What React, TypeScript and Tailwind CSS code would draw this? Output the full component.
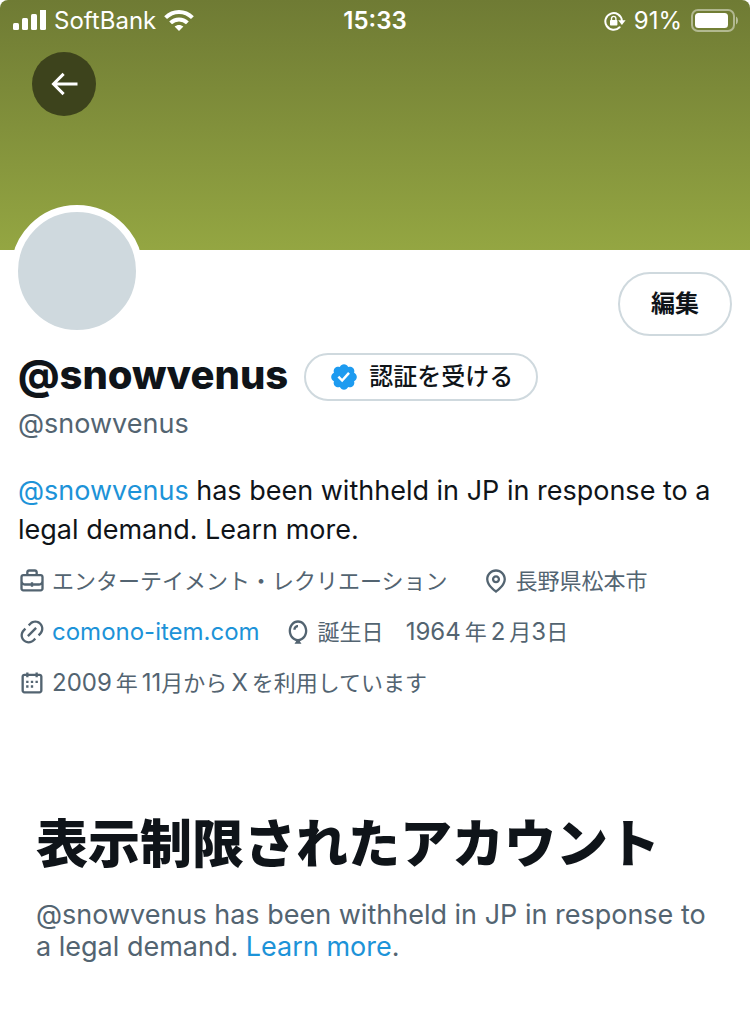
import type { ReactNode } from "react";

const icons = {
  back: "M7.414 13l5.043 5.04-1.414 1.42L3.586 12l7.457-7.46 1.414 1.42L7.414 11H21v2H7.414z",
  verified:
    "M22.25 12c0-1.43-.88-2.67-2.19-3.34.46-1.39.2-2.9-.81-3.91s-2.52-1.27-3.91-.81c-.66-1.31-1.91-2.19-3.34-2.19s-2.67.88-3.33 2.19c-1.4-.46-2.91-.2-3.92.81s-1.26 2.52-.8 3.91c-1.31.67-2.2 1.91-2.2 3.34s.89 2.67 2.2 3.34c-.46 1.39-.21 2.9.8 3.91s2.52 1.26 3.91.81c.67 1.31 1.91 2.19 3.34 2.19s2.68-.88 3.34-2.19c1.39.45 2.9.2 3.91-.81s1.27-2.52.81-3.91c1.31-.67 2.19-1.91 2.19-3.34zm-11.71 4.2L6.8 12.46l1.41-1.42 2.26 2.26 4.8-5.23 1.47 1.36-6.2 6.77z",
  briefcase:
    "M19.5 6H17V4.5C17 3.12 15.88 2 14.5 2h-5C8.12 2 7 3.12 7 4.5V6H4.5C3.12 6 2 7.12 2 8.5v10C2 19.88 3.12 21 4.5 21h15c1.38 0 2.5-1.12 2.5-2.5v-10C22 7.12 20.88 6 19.5 6zM9 4.5c0-.28.23-.5.5-.5h5c.28 0 .5.22.5.5V6H9V4.5zm11 14c0 .28-.22.5-.5.5h-15c-.27 0-.5-.22-.5-.5v-3.04c.59.35 1.27.54 2 .54h5v1h2v-1h5c.73 0 1.41-.19 2-.54v3.04zm0-6.49c0 1.1-.9 1.99-2 1.99h-5v-1h-2v1H6c-1.1 0-2-.9-2-2V8.5c0-.28.23-.5.5-.5h15c.28 0 .5.22.5.5v3.51z",
  location:
    "M12 7c-1.93 0-3.5 1.57-3.5 3.5S10.07 14 12 14s3.5-1.57 3.5-3.5S13.93 7 12 7zm0 5c-.827 0-1.5-.673-1.5-1.5S11.173 9 12 9s1.5.673 1.5 1.5S12.827 12 12 12zm0-10c-4.687 0-8.5 3.813-8.5 8.5 0 5.967 7.621 11.116 7.945 11.332l.555.37.555-.37c.324-.216 7.945-5.365 7.945-11.332C20.5 5.813 16.687 2 12 2zm0 17.77c-1.665-1.241-6.5-5.196-6.5-9.27C5.5 6.916 8.416 4 12 4s6.5 2.916 6.5 6.5c0 4.073-4.835 8.028-6.5 9.27z",
  link: "M18.36 5.64c-1.95-1.96-5.11-1.96-7.07 0L9.88 7.05 8.46 5.64l1.42-1.42c2.73-2.73 7.16-2.73 9.9 0 2.73 2.74 2.73 7.17 0 9.9l-1.42 1.42-1.41-1.42 1.41-1.41c1.96-1.96 1.96-5.12 0-7.07zm-2.12 3.53l-7.07 7.07-1.41-1.41 7.07-7.07 1.41 1.41zm-12.02.71l1.42-1.42 1.41 1.42-1.41 1.41c-1.96 1.96-1.96 5.12 0 7.07 1.95 1.96 5.11 1.96 7.07 0l1.41-1.41 1.42 1.41-1.42 1.42c-2.73 2.73-7.16 2.73-9.9 0-2.73-2.74-2.73-7.17 0-9.9z",
  balloon:
    "M8 10c0-2.21 1.79-4 4-4v2c-1.1 0-2 .9-2 2H8zm12 1c0 4.27-2.69 8.01-6.44 8.83L15 22H9l1.45-2.17C6.7 19.01 4 15.27 4 11c0-4.84 3.46-9 8-9s8 4.16 8 9zm-8 7c3.19 0 6-3 6-7s-2.81-7-6-7-6 3-6 7 2.81 7 6 7z",
  calendar:
    "M7 4V3h2v1h6V3h2v1h1.5C19.89 4 21 5.12 21 6.5v12c0 1.38-1.11 2.5-2.5 2.5h-13C4.12 21 3 19.88 3 18.5v-12C3 5.12 4.12 4 5.5 4H7zm0 2H5.5c-.27 0-.5.22-.5.5v12c0 .28.23.5.5.5h13c.28 0 .5-.22.5-.5v-12c0-.28-.22-.5-.5-.5H17v1h-2V6H9v1H7V6zm0 6h2v-2H7v2zm0 4h2v-2H7v2zm4-4h2v-2h-2v2zm0 4h2v-2h-2v2zm4-4h2v-2h-2v2z",
};

interface IconProps {
  name: keyof typeof icons;
  className?: string;
}

const Icon: React.FC<IconProps> = ({ name, className }) => (
  <svg viewBox="0 0 24 24" fill="currentColor" aria-hidden="true" className={className}>
    <path d={icons[name]} />
  </svg>
);

const StatusBar = () => (
  <div className="grid grid-cols-3 items-center h-[42px] px-3 text-2xl leading-8">
    <div className="flex items-center gap-2">
      <svg viewBox="0 0 34 22" fill="currentColor" className="w-[34px] h-[22px]" aria-hidden="true">
        <rect x="1" y="13" width="6" height="7" rx="1.5" />
        <rect x="10" y="8" width="6" height="12" rx="1.5" />
        <rect x="19" y="4" width="6" height="16" rx="1.5" />
        <rect x="28" y="-1" width="6" height="21" rx="1.5" />
      </svg>
      <span>SoftBank</span>
      <svg viewBox="0 0 30 22" className="w-[30px] h-[22px]" aria-hidden="true">
        <g fill="none" stroke="currentColor" strokeWidth="4">
          <path d="M1.6 7.7C9.2 .1 20.8 .1 28.4 7.7" />
          <path d="M6.6 12.9C11.4 8.2 18.6 8.2 23.4 12.9" />
        </g>
        <path d="M10.6 16.6C13.1 14.3 16.9 14.3 19.4 16.6L15 21z" fill="currentColor" />
      </svg>
    </div>
    <span className="text-center font-semibold">15:33</span>
    <div className="flex items-center justify-end gap-2">
      <svg viewBox="0 0 22 20" className="w-[22px] h-5" aria-hidden="true">
        <path
          d="M15.6 16.2A8.3 8.3 0 1 1 17.9 9.5"
          fill="none"
          stroke="currentColor"
          strokeWidth="2"
          strokeLinecap="round"
        />
        <path d="M14.2 9.2h7.4l-3.7 4.8z" fill="currentColor" />
        <rect x="6" y="9" width="7.4" height="5.6" rx=".8" fill="currentColor" />
        <path d="M7.5 9.4V7.6a2.2 2.2 0 0 1 4.4 0v1.8" fill="none" stroke="currentColor" strokeWidth="1.4" />
      </svg>
      <span>91%</span>
      <svg viewBox="0 0 48 24" className="w-12 h-6" aria-hidden="true">
        <rect x="2" y="1" width="42" height="21" rx="6" fill="none" stroke="currentColor" strokeWidth="2" opacity=".45" />
        <rect x="5" y="4" width="33" height="15" rx="3.5" fill="currentColor" />
        <path d="M46 7.5c2.6 1.2 2.6 6.8 0 8z" fill="currentColor" opacity=".5" />
      </svg>
    </div>
  </div>
);

interface MetaItemProps {
  icon: keyof typeof icons;
  children: ReactNode;
}

const MetaItem: React.FC<MetaItemProps> = ({ icon, children }) => (
  <li className="flex items-center gap-1.5">
    <Icon name={icon} className="size-7 shrink-0" />
    <span>{children}</span>
  </li>
);

const App = () => {
  return (
    <div
      lang="ja"
      className="min-h-screen bg-white text-[#0f1419] font-['Inter','Noto_Sans_CJK_JP',sans-serif]"
    >
      <header className="h-[250px] rounded-t-lg bg-linear-to-b from-[#6f7b34] to-[#94a642] text-white">
        <StatusBar />
        <div className="px-8 pt-2.5">
          <button
            aria-label="戻る"
            className="flex size-16 items-center justify-center rounded-full bg-[#3d431c]"
          >
            <Icon name="back" className="size-9" />
          </button>
        </div>
      </header>

      <main>
        <section className="px-[18px]">
          <div className="flex items-start justify-between">
            <div className="-mt-[45px] -ml-[7px] size-[132px] rounded-full border-7 border-white bg-[#cfd9de]" />
            <button className="mt-[22px] h-16 w-[114px] rounded-full border-2 border-[#cfd9de] text-2xl font-bold">
              編集
            </button>
          </div>

          <div className="mt-4 flex items-center gap-4">
            <h1 className="text-[40px] leading-11 pb-1 font-extrabold">@snowvenus</h1>
            <button className="flex h-12 items-center gap-2.5 rounded-full border-2 border-[#cfd9de] px-[23px] text-2xl font-medium">
              <Icon name="verified" className="size-[30px] text-[#1d9bf0]" />
              認証を受ける
            </button>
          </div>
          <p className="mt-[3px] text-[27px] leading-10 text-[#536471]">@snowvenus</p>

          <p className="mt-[27px] text-[27px] leading-[39px]">
            <a href="#" className="text-[#1d93d8]">
              @snowvenus
            </a>{" "}
            has been withheld in JP in response to a legal demand. Learn more.
          </p>

          <div className="mt-4 flex flex-col gap-[19px] text-[22px] leading-8 text-[#536471]">
            <ul className="flex flex-wrap gap-x-[34px]">
              <MetaItem icon="briefcase">エンターテイメント・レクリエーション</MetaItem>
              <MetaItem icon="location">長野県松本市</MetaItem>
            </ul>
            <ul className="flex flex-wrap gap-x-6">
              <MetaItem icon="link">
                <a href="#" className="text-2xl leading-8 text-[#1d93d8]">
                  comono-item.com
                </a>
              </MetaItem>
              <MetaItem icon="balloon">
                誕生日　<span className="mr-1 text-2xl leading-8">1964</span>年
                <span className="mx-1 text-2xl leading-8">2</span>月
                <span className="text-2xl leading-8">3</span>日
              </MetaItem>
            </ul>
            <ul className="flex flex-wrap">
              <MetaItem icon="calendar">
                <span className="mr-1 text-2xl leading-8">2009</span>年
                <span className="ml-1 text-2xl leading-8">11</span>月から
                <span className="mx-1 text-2xl leading-8">X</span>を利用しています
              </MetaItem>
            </ul>
          </div>
        </section>

        <section className="mt-[110px] px-9 pb-12">
          <h2 className="text-[52px] leading-[72px] font-extrabold">表示制限されたアカウント</h2>
          <p className="mt-[18px] text-[27px] leading-8 text-[#536471]">
            @snowvenus has been withheld in JP in response to a legal demand.{" "}
            <a href="#" className="text-[#1d93d8]">
              Learn more
            </a>
            .
          </p>
        </section>
      </main>
    </div>
  );
};

export default App;
